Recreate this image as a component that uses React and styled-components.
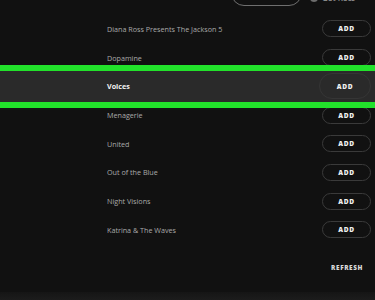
import styled, { createGlobalStyle } from "styled-components";

const GlobalStyle = createGlobalStyle`
  html, body {
    margin: 0;
    padding: 0;
    background: #111111;
  }
  body {
    font-family: "Open Sans", "Liberation Sans", sans-serif;
    -webkit-font-smoothing: antialiased;
  }
`;

const tracks = [
  "Diana Ross Presents The Jackson 5",
  "Dopamine",
  "Voices",
  "Menagerie",
  "United",
  "Out of the Blue",
  "Night Visions",
  "Katrina & The Waves",
];

const ACTIVE = 2;

const Page = styled.div`
  width: 375px;
  height: 300px;
  overflow: hidden;
  display: flex;
  flex-direction: column;
  background: #111111;
`;

const TopBar = styled.div`
  height: 14.6px;
  display: flex;
  align-items: flex-start;
  justify-content: flex-end;
  gap: 8px;
  padding-right: 9px;
  overflow: hidden;
`;

const PillButton = styled.div`
  width: 71px;
  height: 26px;
  margin-top: -20px;
  box-sizing: border-box;
  border: 1px solid #6f6f6f;
  border-radius: 13px;
`;

const Account = styled.div`
  display: flex;
  align-items: center;
  gap: 4px;
  width: 56px;
  margin-top: -8px;
  color: #8a8a8a;
  font-size: 8px;
  font-weight: 600;
  white-space: nowrap;
`;

const Avatar = styled.div`
  flex: none;
  width: 8px;
  height: 8px;
  border-radius: 50%;
  background: #6d6d6d;
`;

const List = styled.div`
  display: flex;
  flex-direction: column;
`;

const Row = styled.div`
  position: relative;
  display: flex;
  align-items: center;
  justify-content: space-between;
  height: ${({ $active }) => ($active ? "31px" : "28.7px")};
  padding: 0 4px 0 107px;
  box-sizing: content-box;
  background: ${({ $active }) => ($active ? "#2a2a2a" : "transparent")};
  border-top: ${({ $active }) => ($active ? "6px solid #22e22b" : "none")};
  border-bottom: ${({ $active }) => ($active ? "6px solid #22e22b" : "none")};
  margin: ${({ $active }) => ($active ? "-7px 0 -7.3px" : "0")};
  z-index: ${({ $active }) => ($active ? 1 : 0)};
`;

const Title = styled.span`
  font-size: 7.2px;
  font-weight: ${({ $active }) => ($active ? 700 : 400)};
  color: ${({ $active }) => ($active ? "#f2f2f2" : "#a9a9a9")};
  white-space: nowrap;
`;

const AddButton = styled.button`
  width: ${({ $active }) => ($active ? "52px" : "49px")};
  height: ${({ $active }) => ($active ? "26px" : "17px")};
  box-sizing: border-box;
  border: 1px solid ${({ $active }) => ($active ? "#353535" : "#3a3a3a")};
  border-radius: 13px;
  background: transparent;
  color: #f0f0f0;
  font-family: "Open Sans", "Liberation Sans", sans-serif;
  font-size: 6.6px;
  font-weight: 800;
  letter-spacing: 0.6px;
  padding: 0;
  display: flex;
  align-items: center;
  justify-content: center;
`;

const Footer = styled.div`
  display: flex;
  justify-content: flex-end;
  align-items: center;
  height: 46px;
  padding-right: 12px;
`;

const Refresh = styled.span`
  font-size: 6.4px;
  font-weight: 800;
  letter-spacing: 0.6px;
  color: #d8d8d8;
`;

const BottomBand = styled.div`
  flex: 1;
  margin-top: 2px;
  background: linear-gradient(#151515, #1c1c1c);
`;

export default function App() {
  return (
    <>
      <GlobalStyle />
      <Page>
        <TopBar>
          <PillButton />
          <Account>
            <Avatar />
            <span>Get Recs</span>
          </Account>
        </TopBar>
        <List>
          {tracks.map((name, i) => (
            <Row key={name} $active={i === ACTIVE}>
              <Title $active={i === ACTIVE}>{name}</Title>
              <AddButton $active={i === ACTIVE}>ADD</AddButton>
            </Row>
          ))}
        </List>
        <Footer>
          <Refresh>REFRESH</Refresh>
        </Footer>
        <BottomBand />
      </Page>
    </>
  );
}
